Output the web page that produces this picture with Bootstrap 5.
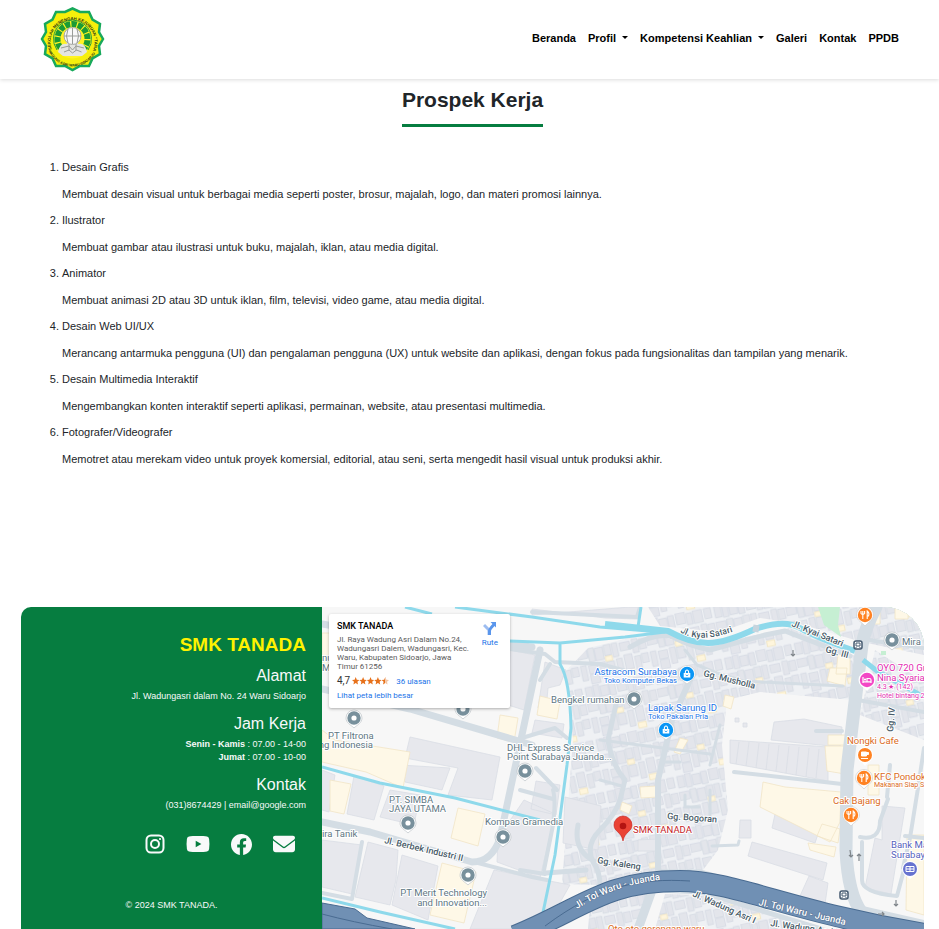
<!DOCTYPE html>
<html lang="id">
<head>
<meta charset="utf-8">
<meta name="viewport" content="width=device-width, initial-scale=1">
<title>Prospek Kerja - SMK TANADA</title>
<link href="https://cdn.jsdelivr.net/npm/bootstrap@5.3.0/dist/css/bootstrap.min.css" rel="stylesheet">
<style>
body{font-family:"Liberation Sans",Arial,sans-serif;font-size:11px;line-height:16px;color:#212529;background:#fff}
.site-nav{height:79px;padding:0 40px;box-shadow:0 1px 4px rgba(0,0,0,.14);background:#fff}
.site-nav .navbar-nav{gap:12px;padding-bottom:3px}
.site-nav .navbar-nav .nav-link{padding:0;font-size:11px;font-weight:700;color:#000;border:0;background:none}
.site-nav .dropdown-toggle::after{margin-left:6px;border-width:3px 3px 0;vertical-align:3px}
.site-nav .dropdown-menu{font-size:11px}
.page-body{padding:0 15px 0 21px}
.page-title{font-size:21px;line-height:26px;font-weight:700;padding:8px 0 11px;border-bottom:3px solid #067d40}
.job-list{padding-left:41px;margin:32px 0 40px}
.job-list li{margin-bottom:10px}
.job-list p{margin:11px 0 0}
.site-footer{background:#067d40;color:#f8f9fa;border-radius:10px 40px 0 0;overflow:hidden;min-height:322px}
.contact-col{padding:25px 16px 14px}
.contact-col h2{font-size:19px;line-height:26px;font-weight:700;color:#fff200;margin:0 0 8px}
.contact-col h3{font-size:16px;line-height:20px;font-weight:400;margin:0 0 4px}
.contact-col p{font-size:9px;line-height:13px;margin:0 0 11px}
.social-links{margin-top:20px}
.social-links a{width:43px;height:24px;color:#f8f9fa}
.contact-col .copy-note{margin:43px 0 0}
.map-col{min-height:322px;background:#f7f7f7}
.map-art{position:absolute;inset:0;width:100%;height:100%;font-family:Roboto,sans-serif}
.place-card{position:absolute;left:7px;top:7px;width:181px;height:94px;padding:6px 8px;background:#fff;color:#5b5b5b;box-shadow:0 1px 3px rgba(0,0,0,.3);border-radius:2px;font:8px/9px Roboto,sans-serif}
.place-card h4{font-size:9px;line-height:12px;font-weight:500;color:#000;margin:0 0 3px}
.place-card address{width:135px;margin:0 0 4px;line-height:9px}
.place-card a{color:#1a73e8;text-decoration:none}
.place-card .score{font-size:10px;line-height:12px;color:#333}
.place-card .stars{margin:0 7px 0 2px}
.place-card .route-link{position:absolute;right:12px;top:8px;text-align:center}
.route-link svg{margin-bottom:3px}
</style>
<script src="https://cdn.jsdelivr.net/npm/bootstrap@5.3.0/dist/js/bootstrap.bundle.min.js"></script>
</head>
<body class="min-vh-100 d-flex flex-column">
<nav class="site-nav navbar navbar-expand d-flex justify-content-between align-items-center" aria-label="Utama">
  <a class="navbar-brand p-0 m-0" href="#" aria-label="SMK TANADA">
    <svg class="d-block" width="65" height="65" viewBox="0 0 65 65">
      <defs><path id="ringTop" d="M11.800 42.500A22 22 0 1 1 53.200 42.500"/><path id="ringLow" d="M8.500 43.500A26 26 0 0 0 56.500 43.500"/></defs>
      <path d="M32.500 1.500 40 5 49 5 52.500 12.500 60 17 59 25 63 32 59 39 60 47 52.500 51.500 49 59 40 59 32.500 63 25 59 16 59 12.500 51.500 5 47 6 39 2 32 6 25 5 17 12.500 12.500 16 5 25 5Z" fill="#f6ef0b" stroke="#18a95b" stroke-width="2.500"/>
      <circle cx="32.500" cy="32" r="19.500" fill="#fff324"/>
      <path d="M17 43A19 19 0 1 1 48 43" fill="none" stroke="#209b3a"/>
      <path d="M20.500 41A15 15 0 1 1 44.500 41" fill="none" stroke="#1b9b35" stroke-width="6" stroke-dasharray="5.200 1.200"/>
      <path d="M18 45Q20 35 27 37L25 29A8 8 0 0 1 40 29L38 37Q45 35 47 45L42 49H23Z" fill="#e4e5e1"/>
      <circle cx="32.500" cy="29" r="8.500" fill="#f8f8f8" stroke="#a8aaa6"/><path d="M24 29h17M32.500 21v16M28 22q-3 7 0 14M37 22q3 7 0 14M21 41l8-2 3.500 4 3.500-4 8 2M24 45l5-2 3.500 3 4-3 5 2M29 37v7M36 37v7" fill="none" stroke="#999c98"/>
      <g font-family="Liberation Sans,sans-serif" font-weight="700" fill="#263314"><text font-size="4.200"><textPath href="#ringTop">SEKOLAH MENENGAH KEJURUAN "TANADA"</textPath></text><text font-size="3.600"><textPath href="#ringLow">WADUNG ASRI WARU SIDOARJO</textPath></text></g>
    </svg>
  </a>
  <ul class="navbar-nav">
    <li class="nav-item"><a class="nav-link" href="#">Beranda</a></li>
    <li class="nav-item dropdown"><button class="nav-link dropdown-toggle" type="button" data-bs-toggle="dropdown">Profil</button><ul class="dropdown-menu"><li><a class="dropdown-item" href="#">Profil Sekolah</a></li></ul></li>
    <li class="nav-item dropdown"><button class="nav-link dropdown-toggle" type="button" data-bs-toggle="dropdown">Kompetensi Keahlian</button><ul class="dropdown-menu"><li><a class="dropdown-item" href="#">Multimedia</a></li></ul></li>
    <li class="nav-item"><a class="nav-link" href="#">Galeri</a></li>
    <li class="nav-item"><a class="nav-link" href="#">Kontak</a></li>
    <li class="nav-item"><a class="nav-link" href="#">PPDB</a></li>
  </ul>
</nav>

<div class="page-body flex-grow-1 d-flex flex-column">
<main class="flex-grow-1">
  <div class="text-center"><h1 class="page-title d-inline-block m-0 align-top">Prospek Kerja</h1></div>
  <ol class="job-list">
    <li>Desain Grafis<p>Membuat desain visual untuk berbagai media seperti poster, brosur, majalah, logo, dan materi promosi lainnya.</p></li>
    <li>Ilustrator<p>Membuat gambar atau ilustrasi untuk buku, majalah, iklan, atau media digital.</p></li>
    <li>Animator<p>Membuat animasi 2D atau 3D untuk iklan, film, televisi, video game, atau media digital.</p></li>
    <li>Desain Web UI/UX<p>Merancang antarmuka pengguna (UI) dan pengalaman pengguna (UX) untuk website dan aplikasi, dengan fokus pada fungsionalitas dan tampilan yang menarik.</p></li>
    <li>Desain Multimedia Interaktif<p>Mengembangkan konten interaktif seperti aplikasi, permainan, website, atau presentasi multimedia.</p></li>
    <li>Fotografer/Videografer<p>Memotret atau merekam video untuk proyek komersial, editorial, atau seni, serta mengedit hasil visual untuk produksi akhir.</p></li>
  </ol>
</main>

<footer class="site-footer row g-0">
  <div class="contact-col col-4 text-end">
    <h2>SMK TANADA</h2>
    <h3>Alamat</h3><p>Jl. Wadungasri dalam No. 24 Waru Sidoarjo</p>
    <h3>Jam Kerja</h3><p><b>Senin - Kamis</b> : 07.00 - 14-00<br><b>Jumat</b> : 07.00 - 10-00</p>
    <h3>Kontak</h3><p>(031)8674429 | email@google.com</p>
    <div class="social-links d-flex justify-content-end">
      <a class="d-flex align-items-center justify-content-center" href="#" aria-label="Instagram"><svg width="20" height="20" viewBox="0 0 20 20" fill="none" stroke="currentColor" stroke-width="2"><rect x="1.500" y="1.500" width="17" height="17" rx="4.500"/><circle cx="10" cy="10" r="4"/><circle cx="15" cy="5" r="1.100" fill="currentColor" stroke="none"/></svg></a>
      <a class="d-flex align-items-center justify-content-center" href="#" aria-label="YouTube"><svg width="24" height="18" viewBox="0 0 24 18"><path fill="currentColor" fill-rule="evenodd" d="M12 1C16 1 19 1.100 21 1.600Q22.800 2 23.100 4 23.800 9 23.100 14 22.800 16 21 16.500C18 17.200 6 17.200 3 16.500Q1.200 16 .9 14 .2 9 .9 4 1.200 2 3 1.600C5 1.100 8 1 12 1ZM9.700 5.700V12.300L15.400 9Z"/></svg></a>
      <a class="d-flex align-items-center justify-content-center" href="#" aria-label="Facebook"><svg width="21" height="21" viewBox="0 0 16 16"><path fill="currentColor" d="M16 8.049c0-4.446-3.582-8.050-8-8.050C3.580 0-.002 3.603-.002 8.050c0 4.017 2.926 7.347 6.750 7.951v-5.625h-2.030V8.050H6.750V6.275c0-2.017 1.195-3.131 3.022-3.131.876 0 1.791.157 1.791.157v1.980h-1.009c-.993 0-1.303.621-1.303 1.258v1.510h2.218l-.354 2.326H9.250V16c3.824-.604 6.750-3.934 6.750-7.951z"/></svg></a>
      <a class="d-flex align-items-center justify-content-center" href="#" aria-label="Email"><svg width="22" height="22" viewBox="0 0 512 512"><path fill="currentColor" d="M48 64C21.500 64 0 85.500 0 112c0 15.100 7.100 29.300 19.200 38.400L236.800 313.600c11.400 8.500 27 8.500 38.400 0L492.800 150.400c12.100-9.100 19.200-23.300 19.200-38.400c0-26.500-21.500-48-48-48H48zM0 176V384c0 35.300 28.700 64 64 64H448c35.300 0 64-28.700 64-64V176L294.400 339.200c-22.800 17.100-54 17.100-76.800 0L0 176z"/></svg></a>
    </div>
    <p class="copy-note text-center">© 2024 SMK TANADA.</p>
  </div>

  <div class="map-col col-8 position-relative overflow-hidden">
    <svg class="map-art" viewBox="322 607 602 322" preserveAspectRatio="xMinYMin slice" role="img" aria-label="Peta lokasi SMK TANADA">
      <defs>
        <pattern id="houses" width="62" height="46" patternUnits="userSpaceOnUse" patternTransform="rotate(-12) scale(1.150)">
          <rect width="62" height="46" fill="#eff1f4"/>
          <path d="M1 1h6v10H1zM8 0h5v12H8zM14 2h7v9h-7zM22 1h5v11h-5zM29 0h8v10h-8zM38 2h5v10h-5zM44 1h8v11h-8zM54 1h6v9h-6zM0 15h9v7H0zM10 14h5v12h-5zM16 15h7v11h-7zM24 14h6v9h-6zM31 14h5v12h-5zM38 15h9v7h-9zM49 14h5v12h-5zM55 15h6v9h-6zM1 28h5v13H1zM8 29h8v7H8zM18 28h5v14h-5zM24 29h7v10h-7zM33 28h5v14h-5zM40 26h7v13h-7zM49 29h5v12h-5zM55 28h6v8h-6zM8 37h8v8H8z" fill="#e3e5eb" stroke="#d0d6e0" stroke-width=".6"/>
          <path d="M40 40h7v5h-7zM24 24h6v4h-6z" fill="#fef5dc" stroke="#efe0b9" stroke-width=".6"/>
        </pattern>
        <g id="greyPin"><path d="M-8 0A8 8 0 1 1 8 0C8 5 3 7 0 10C-3 7-8 5-8 0" fill="#fff" stroke="#b4babf" stroke-width=".6"/><circle r="6.700" fill="#78909c"/><circle r="2.600" fill="#fff"/></g>
        <g id="foodPin"><path d="M-8.500 0A8.500 8.500 0 1 1 8.500 0C8 6 3 7 0 11C-3 7-8 6-8.500 0" fill="#fff" stroke="#c8c8c8" stroke-width=".6"/><circle r="7.200" fill="#ff8222"/><path d="M-2.200 4V-4M-4-4v2.500q1.800 2 3.600 0V-4M2.200 4V-4q2.600 2 1.300 5h-1" stroke="#fff" stroke-width="1.100" fill="none"/></g>
        <g id="bagPin"><path d="M-8.500 0A8.500 8.500 0 1 1 8.500 0C8 6 3 7 0 10C-3 7-8 6-8.500 0" fill="#fff" stroke="#c8c8c8" stroke-width=".6"/><circle r="7.200" fill="#0b96f5"/><path d="M-3.300-1h6.600v4.500h-6.600z" fill="#fff"/><path d="M-1.700-1q0-3 1.700-3t1.700 3" fill="none" stroke="#fff" stroke-width="1.100"/><path d="M-1.400.8q1.400 2 2.800 0" fill="none" stroke="#0b96f5" stroke-width=".8"/></g>
        <g id="busStop"><rect x="-4" y="-4" width="8" height="8" rx="2" fill="#fff" stroke="#455a70" stroke-width="1.500"/><path d="M-2-2h4v3h-4zM-2 3v-1M2 3v-1" stroke="#455a70" fill="none"/></g>
      </defs>
      <rect x="322" y="607" width="602" height="322" fill="#f7f7f7"/>
      <!-- dense housing -->
      <path fill="url(#houses)" d="M588 648 650 633 700 648 750 636 790 628 860 658 852 700 760 692 727 700 722 745 728 810 718 850 700 874 655 880 600 885 562 884 571 765 573 740 565 672ZM648 607H924V655L862 642 800 624 760 618 720 632 660 626ZM875 650 924 682V740L860 715ZM735 905 830 929H655L665 894 700 895ZM590 905 650 893 640 929H588Z"/>
      <!-- industrial blocks -->
      <g fill="#e7e8ed" stroke="#d9dde5" stroke-width=".8">
        <path d="M532 615 630 607 640 607 638 619 605 618 532 609ZM510 650 535 655 524 710 508 705ZM545 662 566 670 560 685 548 688 546 710 538 708ZM535 720l29 4-2 14-30-5ZM410 737 500 757 492 800 448 795 458 768 405 758ZM354 776 384 786 374 820 347 814ZM390 790 420 795 414 825 380 817ZM400 765 450 768 442 790 405 782ZM322 770l13 5-6 37-7-2ZM368 842 398 850 396 880 390 905 355 897ZM402 855 438 866 428 920 392 905ZM322 840 362 845 352 894 322 887ZM494 870 570 885 545 929H470ZM498 838 524 800 555 814 540 878 497 862ZM565 797l36 9-3 44-35-7ZM560 785l-4 30-25-6 5-28Z"/>
        <path d="M730 740l98 7 0 34-98-18ZM739 742l-3 22M749 742l-3 24M759 743l-3 25M769 744l-3 26M779 745l-3 26M789 746l-3 27M799 747l-3 28M809 748l-3 29M819 749l-3 29M774 722l30-3 38 8-2 20-69-7ZM752 842 827 863 823 880 748 856ZM775 814 820 828 815 843 772 828ZM809 876l19 7-3 21-25-8ZM882 806l23 2-14 86-26-6 10-50 7 2ZM740 820h11v18h-12ZM365 662l20 0v40h-20ZM638 840l20-1v12h-20ZM735 718h4v4h-4ZM743 723h4v4h-4Z"/>
      </g>
      <g fill="#fef8e7" stroke="#f1e5c6" stroke-width=".8">
        <path d="M322 633l12 0v40l-12-3ZM340 660l40 5-2 35-38-8ZM335 740 410 752 403 788 366 772 322 762V730ZM330 780l21 4-7 30-14-3ZM458 808 485 814 478 846 451 838ZM442 863l34 9-12 51-34-8ZM763 782 785 787 841 792 840 822 830 842 760 807ZM500 715l18 3-4 24-17-4ZM540 696l20 5-3 18-20-4ZM822 824l18 5-2 14-21-7ZM830 668h17l-2 18-18-5ZM825 746h20v28l-18-3ZM838 654h12v20h-14ZM868 607h12v17h-12ZM895 607h13v12h-13ZM907 835h17v80l-18-5ZM640 787l16-1 2 11-17 1ZM725 695l9 2-3 12-8-3ZM622 802l10 4-3 8-9-4ZM680 738l8 2-8 14-6-2ZM868 765h11v30h-11ZM828 735h18v10h-18ZM808 843l28 4-2 10-24-7Z"/>
      </g>
      <path d="M818 607h22l-2 18 3 12-17-12ZM881 651h5v4h-5Z" fill="#c6efd3"/>
      <!-- local roads -->
      <g fill="none" stroke="#d4dde4" stroke-linecap="round" stroke-linejoin="round">
        <path d="M322 624C390 637 445 640 532 647M322 689 410 709 532 745M322 822 370 832 472 862Q492 862 500 838L516 763 540 650" stroke-width="7"/>
        <path d="M478 863 532 877 547 880M362 842 352 899 322 893M510 649 545 654 555 662 600 664 630 672M522 738 555 728 567 738M536 768 557 790M520 790l33 9M553 790q3 10 0 35l-9 45M520 870l25 4M540 680l10-16M640 607l-3 10-105-5" stroke-width="4"/>
        <path d="M617 700 608 740Q612 765 625 780L620 800Q615 815 600 830T593 862Q600 870 600 887M578 825q-5 25 16 36M546 873l40-3" stroke-width="5"/>
        <path d="M658 872 658 780 672 720 690 680" stroke-width="6"/>
        <path d="M630 647 Q660 630 675 638T710 650L765 635 785 631 850 656" stroke-width="5"/>
        <path d="M685 650l12 15 20 8 26 8 100 5M600 740l110 14M600 780l22 6M720 725l-10 40M712 846l26-1 1-4M665 762h15M685 795v12h14M710 790v25" stroke-width="3"/>
        <path d="M876 607Q865 628 862 645L854 710 847 770 846 850Q848 895 862 913" stroke-width="13"/>
        <path d="M842 731H816M734 772l108 12M858 700l66 12M924 748l-6 40-8 50-7 30M860 837q20 4 20-16l8-22M862 842v38q0 13 35 16l8-30M890 765l-3 32M905 836l19 2M868 640l56 8" stroke-width="4"/>
        <path d="M651 893 638 929" stroke-width="9"/><path d="M658 890l43 2 120 37M660 872h40l18 5" stroke-width="5"/>
        <path d="M862 910 924 924" stroke-width="8"/>
      </g>
      <!-- canals -->
      <g fill="none" stroke="#8ed9eb" stroke-linejoin="round">
        <path d="M405 607 432 614M455 607 532 617 600 627 660 632M510 641 560 643 625 637 665 632M560 643V664Q570 680 571 728L567 765 555 855 541 922M641 607 638 627M322 767 380 783 455 798 540 820M322 898 380 912 455 929" stroke-width="3"/>
        <path d="M605 624 668 631Q690 643 708 643T757 628" stroke-width="6"/>
        <path d="M755 629Q785 619 800 628T855 651" stroke-width="6"/>
        <path d="M863 660 877 671 924 697" stroke-width="5"/>
      </g>
      <path d="M753 628l6 1" stroke="#c6d4dd" stroke-width="7"/>
      <!-- toll road -->
      <path d="M515 936C585 907 605 881 680 881C735 881 790 912 930 935" fill="none" stroke="#496b91" stroke-width="22"/>
      <path d="M515 936C585 907 605 881 680 881C735 881 790 912 930 935" fill="none" stroke="#7090b4" stroke-width="20"/>
      <path d="M322 903 355 909 367 918 415 929H322Z" fill="#7090b4" stroke="#496b91"/><path d="M322 914q30 8 70 15M545 926C600 885 640 878 690 881" fill="none" stroke="#496b91"/>
      <!-- businesses -->
      <g fill="#607783" font-size="9.500" stroke="#fff" stroke-width="2" paint-order="stroke" stroke-linejoin="round">
        <text x="328" y="739">PT Filtrona</text><text x="373" y="748" text-anchor="end">ng Indonesia</text>
        <text x="322" y="661">nu</text><text x="322" y="671">M</text>
        <text x="507" y="751">DHL Express Service</text><text x="507" y="760">Point Surabaya Juanda...</text>
        <text x="551" y="703">Bengkel rumahan</text><text x="902" y="645">Mira T</text>
        <text x="389" y="803">PT. SIMBA</text><text x="389" y="812">JAYA UTAMA</text><text x="485" y="825">Kompas Gramedia</text><text x="322" y="837">ira Tanik</text>
        <text x="487" y="896" text-anchor="end">PT Merit Technology</text><text x="487" y="906" text-anchor="end">and Innovation...</text>
        <g fill="#1a73e8"><text x="677" y="675" text-anchor="end">Astracom Surabaya</text><text x="677" y="683" text-anchor="end" font-size="7.500">Toko Komputer Bekas</text><text x="648" y="711">Lapak Sarung ID</text><text x="648" y="719" font-size="7.500">Toko Pakaian Pria</text></g>
        <g fill="#db6b1c"><text x="847" y="744">Nongki Cafe</text><text x="874" y="780">KFC Pondok</text><text x="874" y="787" font-size="7">Makanan Siap Saji</text><text x="833" y="804">Cak Bajang</text><text x="608" y="932">Oto oto gorengan waru</text></g>
        <g fill="#e32bb0"><text x="877" y="671">OYO 720 Gr</text><text x="877" y="681">Nina Syaria</text><text x="877" y="689" font-size="7">4.3 ★ (142)</text><text x="877" y="698" font-size="7">Hotel bintang 2</text></g>
        <g fill="#5662bd"><text x="891" y="848">Bank Ma</text><text x="891" y="858">Surabaya</text></g>
        <text x="633" y="833" fill="#c5221f">SMK TANADA</text>
      </g>
      <!-- street names -->
      <g fill="#485b68" font-size="9" font-weight="500" stroke="#fff" stroke-width="2" paint-order="stroke" stroke-linejoin="round">
        <path id="kyaiRoad" d="M680 632Q700 645 740 629" fill="none" stroke="none"/><text><textPath href="#kyaiRoad">Jl. Kyai Satari</textPath></text>
        <text transform="translate(791 626) rotate(22)">Jl. Kyai Satari</text><text transform="translate(825 652) rotate(15)">Gg. III</text><text transform="translate(703 676) rotate(14)">Gg. Musholla</text><text transform="translate(893 732) rotate(-85)">Gg. IV</text>
        <text transform="translate(384 843) rotate(13)">Jl. Berbek Industri II</text><text transform="translate(667 819) rotate(4)">Gg. Bogoran</text><text transform="translate(597 863) rotate(9)">Gg. Kaleng</text><text transform="translate(692 896) rotate(24)">Jl. Wadung Asri I</text><text transform="translate(770 926) rotate(8)">Jl. Wadung Asri I</text>
      </g>
      <g fill="#fff" stroke="#536f91" stroke-width="1" paint-order="stroke" font-size="9.500" font-weight="500"><path id="tollWest" d="M577 909Q615 884 668 879" fill="none" stroke="none"/><text><textPath href="#tollWest">Jl. Tol Waru - Juanda</textPath></text><text transform="translate(758 905) rotate(13)">Jl. Tol Waru - Juanda</text></g>
      <use href="#greyPin" x="354" y="718"/><use href="#greyPin" x="463" y="709"/><use href="#greyPin" x="634" y="699"/><use href="#greyPin" x="892" y="640"/><use href="#greyPin" x="525" y="771"/><use href="#greyPin" x="408" y="823"/><use href="#greyPin" x="503" y="837"/><use href="#greyPin" x="468" y="875"/>
      <use href="#bagPin" x="687" y="674"/><use href="#bagPin" x="666" y="730"/>
      <use href="#foodPin" x="865" y="615"/><use href="#foodPin" x="864" y="778"/><use href="#foodPin" x="851" y="815"/>
      <g transform="translate(865 755)"><circle r="8" fill="#fff"/><path d="M-5 5 0 11 5 5" fill="#fff"/><circle r="7" fill="#ff8222"/><path d="M-3.500-3h5v4h-5zM2-2.500h1.500v2H2M-4 3.500h7" stroke="#fff" fill="#fff"/></g>
      <g transform="translate(867 680)"><circle r="8.500" fill="#fff"/><path d="M-5 6 0 11 5 6" fill="#fff"/><circle r="7.200" fill="#f348c5"/><path d="M-4-3v6M-4 1.800h8M4 3v-3q0-1.500-1.500-1.500H0v3" stroke="#fff" fill="none" stroke-width="1.200"/><circle cx="-2" cy="-.5" r="1.100" fill="#fff"/></g>
      <g transform="translate(910 869)"><circle r="8" fill="#fff"/><path d="M-5 6 0 10 5 6" fill="#fff"/><circle r="7" fill="#6672cf"/><path d="M-4-2.500h8v5h-8zM-4 0h8M0-2.500v5" stroke="#fff" fill="none"/></g>
      <use href="#busStop" x="858" y="645"/><use href="#busStop" x="844" y="895"/>
      <path d="M623 841C621 831 614 832 614 825A9 9 0 1 1 632 825C632 832 625 831 623 841Z" fill="#ea4335" stroke="#c5221f" stroke-width=".6"/><circle cx="623" cy="826" r="3.300" fill="#b31412"/>
      <path d="M793 650v6m-2-2 2 2 2-2M850 850l1 7m-2-2 2 2 2-2M859 861v-7m-2 2 2-2 2 2M896 900v6m-2-2 2 2 2-2M878 914h6m-2-2 2 2-2 2" fill="none" stroke="#80868b" stroke-width="1.200"/>
    </svg>
    <section class="place-card">
      <h4>SMK TANADA</h4>
      <address>Jl. Raya Wadung Asri Dalam No.24, Wadungasri Dalem, Wadungasri, Kec. Waru, Kabupaten Sidoarjo, Jawa Timur 61256</address>
      <div class="d-flex align-items-center mb-1"><span class="score">4,7</span>
        <svg class="stars" width="37" height="8" viewBox="0 0 37 8"><defs><path id="star" d="M3.700 0 4.800 2.700 7.400 2.900 5.400 4.700 6 7.500 3.700 6 1.400 7.500 2 4.700 0 2.900 2.600 2.700Z"/></defs><g fill="#e7711b"><use href="#star"/><use href="#star" x="7.400"/><use href="#star" x="14.800"/><use href="#star" x="22.200"/><path d="M33.300 0V6L31 7.500 31.600 4.700 29.600 2.900 32.200 2.700Z"/><path d="M33.300 0 34.400 2.700 37 2.900 35 4.700 35.600 7.500 33.300 6Z" fill="#f3c3a0"/></g></svg>
        <a href="#">36 ulasan</a></div>
      <a href="#">Lihat peta lebih besar</a>
      <a class="route-link" href="#"><svg class="d-block mx-auto" width="14" height="13" viewBox="0 0 14 13"><path d="M6 13V8L1 3" stroke="#9dbdf0" stroke-width="3" fill="none"/><path d="M6.500 13V9q0-2 5-7" stroke="#5a96ec" stroke-width="3" fill="none"/><path d="M7.500 0H13V5.500Z" fill="#5a96ec"/></svg>Rute</a>
    </section>
  </div>
</footer>
</div>
</body>
</html>
